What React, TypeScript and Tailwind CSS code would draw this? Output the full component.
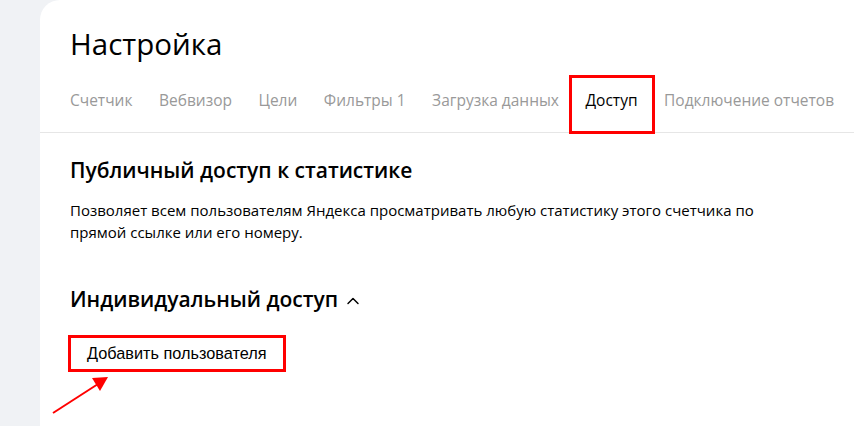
import { ChevronUp } from "lucide-react";

const tabs = ["Счетчик", "Вебвизор", "Цели", "Фильтры 1", "Загрузка данных", "Доступ", "Подключение отчетов"];

export default function App() {
  return (
    <div className="flex h-[426px] w-[854px] overflow-hidden bg-[#f0f2f5] font-['Open_Sans',sans-serif] text-black">
      <div className="w-[40px] shrink-0" />
      <div className="relative flex-1 rounded-tl-[20px] bg-white">
        <div className="pl-[30px] pt-[25px]">
          <h1 className="text-[29.5px] leading-[37px] font-normal">Настройка</h1>
        </div>

        <div className="mt-[18px] flex gap-[26.5px] border-b border-[#e6e6e6] pl-[30px]">
          {tabs.map((t) => {
            const active = t === "Доступ";
            return (
              <div key={t} className="relative">
                <div
                  className={
                    "whitespace-nowrap pt-[10px] pb-[22px] text-[15.5px] leading-[20px] " +
                    (active ? "text-black" : "text-[#999]")
                  }
                >
                  {t}
                </div>
                {active && (
                  <>
                    <div className="absolute bottom-[-1px] left-0 right-0 h-[2px] bg-black" />
                    <div className="absolute -left-[17px] -right-[17px] top-[-5px] bottom-[-2px] border-[3px] border-[#ff0000]" />
                  </>
                )}
              </div>
            );
          })}
        </div>

        <div className="pl-[30px] pt-[23px]">
          <h2 className="text-[21px] font-semibold leading-[28px]">Публичный доступ к статистике</h2>
          <p className="mt-[15px] w-[720px] text-[15px] leading-[22px]">
            Позволяет всем пользователям Яндекса просматривать любую статистику этого счетчика по прямой ссылке или его номеру.
          </p>

          <div className="mt-[42px] flex items-center gap-[5px]">
            <h2 className="text-[21px] font-semibold leading-[28px]">Индивидуальный доступ</h2>
            <ChevronUp size={20} strokeWidth={1.75} className="mt-[4px]" />
          </div>

          <div className="-ml-[2px] mt-[22px] inline-flex">
            <button className="border-[3px] border-[#ff0000] px-[16px] py-[6px] font-['Liberation_Sans',sans-serif] text-[16.3px] leading-[19px]">
              Добавить пользователя
            </button>
          </div>
        </div>

        <svg className="absolute left-[10px] top-[372px]" width="70" height="46" viewBox="0 0 70 46">
          <line x1="3" y1="41" x2="48" y2="12" stroke="#ff0000" strokeWidth="2" />
          <polygon points="58,5 42,6 50,19" fill="#ff0000" />
        </svg>
      </div>
    </div>
  );
}
